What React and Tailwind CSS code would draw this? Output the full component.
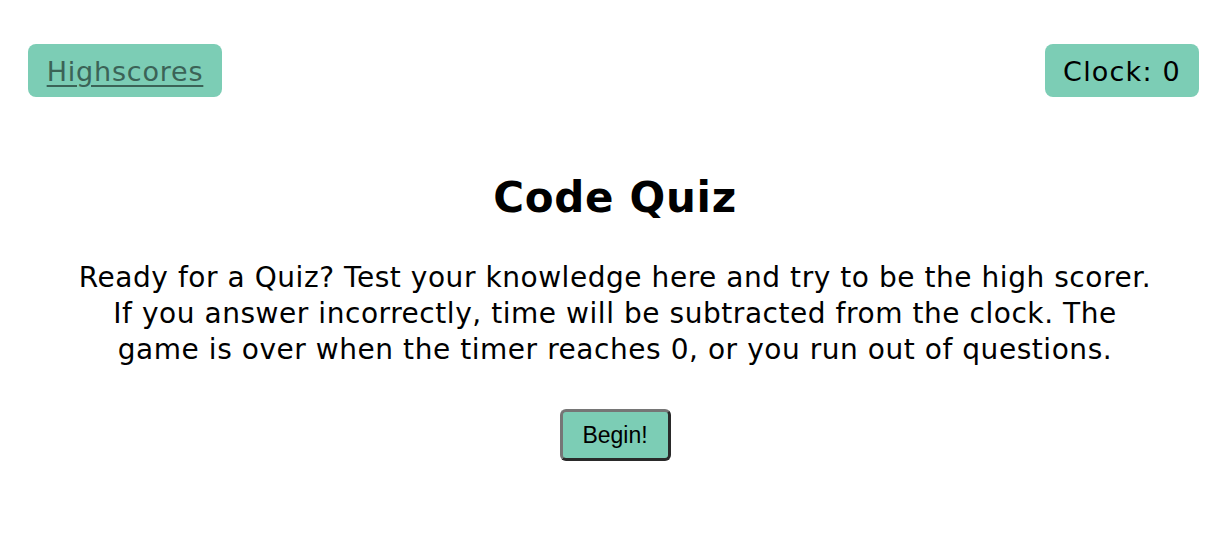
export default function App() {
  return (
    <div className="min-h-[558px] bg-white text-black" style={{ fontFamily: '"DejaVu Sans", Verdana, sans-serif' }}>
      <header className="flex justify-between items-start pl-[28px] pt-[44px] pr-[31px]">
        <div className="h-[53px] w-[194px] pt-[3px] flex items-center justify-center rounded-[8px] bg-[#7ccdb5]">
          <a href="#" className="text-[27px] tracking-[0.8px] text-[#3b6357] underline underline-offset-[4px]">Highscores</a>
        </div>
        <div className="h-[53px] w-[154px] pt-[3px] flex items-center justify-center rounded-[8px] bg-[#7ccdb5]">
          <span className="text-[27px] tracking-[1.2px]">Clock: 0</span>
        </div>
      </header>

      <main className="flex flex-col items-center text-center">
        <h1 className="mt-[77px] text-[42px] tracking-[0.7px] font-bold leading-[48px]">Code Quiz</h1>
        <p className="mt-[38px] text-[28px] tracking-[0.55px] leading-[36px]">
          Ready for a Quiz? Test your knowledge here and try to be the high scorer.
          <br />
          If you answer incorrectly, time will be subtracted from the clock. The
          <br />
          game is over when the timer reaches 0, or you run out of questions.
        </p>
        <button
          className="mt-[41px] w-[111px] h-[52px] rounded-[6px] bg-[#7ccdb5] border-[3px] border-t-[#767676] border-l-[#767676] border-r-[#2a2a2a] border-b-[#2a2a2a] text-[23px]"
          style={{ fontFamily: '"Liberation Sans", Arial, sans-serif' }}
        >
          Begin!
        </button>
      </main>
    </div>
  );
}
